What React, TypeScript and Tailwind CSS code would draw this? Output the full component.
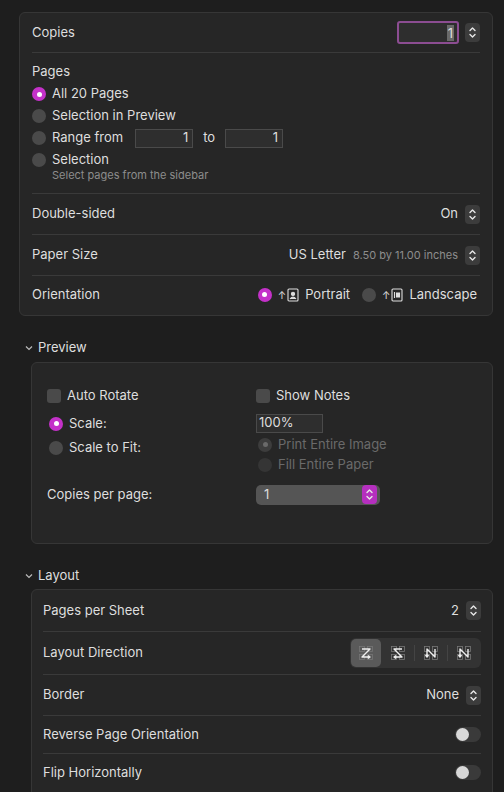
import React from 'react'

const font = { fontFamily: 'Inter, "Liberation Sans", sans-serif' }

function Stepper({ accent = false }: { accent?: boolean }) {
  return (
    <span className={`flex h-[19px] w-[15px] flex-col items-center justify-center rounded-[4px] ${accent ? 'bg-[#b52fbf]' : 'bg-[#3c3c3c]'}`}>
      <svg width="9" height="13" viewBox="0 0 9 13" fill="none" stroke="#e8e8e8" strokeWidth="1.4" strokeLinecap="round" strokeLinejoin="round">
        <path d="M2 4.5 L4.5 2 L7 4.5" />
        <path d="M2 8.5 L4.5 11 L7 8.5" />
      </svg>
    </span>
  )
}

function Radio({ on = false, dim = false }: { on?: boolean; dim?: boolean }) {
  if (on)
    return (
      <span className={`flex h-[14px] w-[14px] items-center justify-center rounded-full ${dim ? 'bg-[#3d3d3d]' : 'bg-[#c431c9]'}`}>
        <span className={`h-[5px] w-[5px] rounded-full ${dim ? 'bg-[#6a6a6a]' : 'bg-white'}`} />
      </span>
    )
  return <span className={`h-[14px] w-[14px] rounded-full ${dim ? 'bg-[#353535]' : 'bg-[#4a4a4a]'}`} />
}

function Check() {
  return <span className="h-[14px] w-[14px] rounded-[3px] bg-[#4a4a4a]" />
}

function Toggle() {
  return (
    <span className="flex h-[15px] w-[26px] items-center rounded-full bg-[#3a3a3a] px-[1px]">
      <span className="h-[13px] w-[13px] rounded-full bg-[#d8d8d8]" />
    </span>
  )
}

function Field({ w, children }: { w: string; children: React.ReactNode }) {
  return <span className={`flex h-[19px] ${w} items-center justify-end border border-[#4a4a4a] bg-[#2e2e2e] px-[4px] text-[13px]`}>{children}</span>
}

function Divider() {
  return <div className="h-px bg-[#3a3a3a]" />
}

function Chevron() {
  return (
    <svg width="8" height="6" viewBox="0 0 8 6" fill="none" stroke="#bbb" strokeWidth="1.2">
      <path d="M1 1.5 L4 4.5 L7 1.5" />
    </svg>
  )
}

function DirIcon({ d }: { d: string }) {
  return (
    <svg width="16" height="16" viewBox="0 0 16 16" fill="none">
      <rect x="1.5" y="1.5" width="5" height="5" stroke="#777" strokeWidth="0.8" />
      <rect x="9.5" y="1.5" width="5" height="5" stroke="#777" strokeWidth="0.8" />
      <rect x="1.5" y="9.5" width="5" height="5" stroke="#777" strokeWidth="0.8" />
      <rect x="9.5" y="9.5" width="5" height="5" stroke="#777" strokeWidth="0.8" />
      <path d={d} stroke="#eee" strokeWidth="1.4" strokeLinejoin="round" />
    </svg>
  )
}

function PageIcon({ land = false }: { land?: boolean }) {
  return (
    <span className="flex items-center gap-[1px]">
      <span className="text-[10px] leading-none">↑</span>
      <svg width="12" height="14" viewBox="0 0 12 14" fill="none" stroke="#ddd" strokeWidth="1.1">
        <rect x="1" y="1" width="10" height="12" rx="1" />
        {land ? <path d="M3.5 4v6M5.5 5h3v4h-3z" fill="#ddd" /> : <path d="M3 11q3-4 6 0M6 7.5a1.6 1.6 0 1 0 0-3.2 1.6 1.6 0 0 0 0 3.2z" fill="#ddd" />}
      </svg>
    </span>
  )
}

export default function App() {
  return (
    <div className="h-[792px] w-[504px] overflow-hidden bg-[#1e1e1e] pt-[12px] text-[13px] text-[#dedede]" style={font}>
      <div className="ml-[19px] mr-[11px] rounded-[6px] border border-[#363636] bg-[#262626] px-[12px] pb-[2px]">
        <div className="flex h-[39px] items-center justify-between">
          <span>Copies</span>
          <span className="flex items-center gap-[6px]">
            <span className="flex h-[23px] w-[62px] items-center justify-end rounded-[3px] border-[2px] border-[#8c4d92] bg-[#2e2e2e] pr-[3px]">
              <span className="bg-[#6a6a6a] px-[1px] leading-[16px]">1</span>
            </span>
            <Stepper />
          </span>
        </div>
        <Divider />
        <div className="pb-[10px] pt-[9px]">
          <div className="mb-[6px] leading-[18px]">Pages</div>
          <div className="flex flex-col gap-[6px]">
            <label className="flex h-[16px] items-center gap-[6px]"><Radio on />All 20 Pages</label>
            <label className="flex h-[16px] items-center gap-[6px]"><Radio />Selection in Preview</label>
            <label className="flex h-[16px] items-center gap-[6px]">
              <Radio />Range from
              <span className="ml-[6px]"><Field w="w-[58px]">1</Field></span>
              <span className="mx-[4px]">to</span>
              <Field w="w-[58px]">1</Field>
            </label>
            <div>
              <label className="flex h-[16px] items-center gap-[6px]"><Radio />Selection</label>
              <div className="ml-[20px] text-[11px] leading-[15px] text-[#8d8d8d]">Select pages from the sidebar</div>
            </div>
          </div>
        </div>
        <Divider />
        <div className="flex h-[40px] items-center justify-between">
          <span>Double-sided</span>
          <span className="flex items-center gap-[7px]">On<Stepper /></span>
        </div>
        <Divider />
        <div className="flex h-[40px] items-center justify-between">
          <span>Paper Size</span>
          <span className="flex items-center gap-[7px]">US Letter<span className="text-[11px] text-[#8d8d8d]">8.50 by 11.00 inches</span><Stepper /></span>
        </div>
        <Divider />
        <div className="flex h-[37px] items-center justify-between">
          <span>Orientation</span>
          <span className="flex items-center gap-[6px] pr-[3px]">
            <Radio on /><PageIcon /><span className="mr-[6px]">Portrait</span>
            <Radio /><PageIcon land /><span>Landscape</span>
          </span>
        </div>
      </div>

      <div className="ml-[25px] mt-[23px] flex h-[18px] items-center gap-[5px]"><Chevron />Preview</div>
      <div className="ml-[31px] mr-[11px] mt-[5px] h-[182px] rounded-[6px] border border-[#363636] bg-[#262626] px-[15px] pt-[23px]">
        <div className="grid grid-cols-[209px_1fr] gap-y-[8px]">
          <label className="flex items-center gap-[6px]"><Check />Auto Rotate</label>
          <label className="flex items-center gap-[6px]"><Check />Show Notes</label>
          <div className="flex flex-col gap-[8px] pt-[2px]">
            <label className="flex h-[16px] items-center gap-[6px] pl-[2px]"><Radio on />Scale:</label>
            <label className="flex h-[16px] items-center gap-[6px] pl-[2px]"><Radio />Scale to Fit:</label>
          </div>
          <div className="flex flex-col gap-[4px]">
            <span className="flex h-[19px] w-[67px] items-center border border-[#4a4a4a] bg-[#2e2e2e] px-[2px]">100%</span>
            <label className="flex h-[16px] items-center gap-[6px] pl-[2px] text-[#6a6a6a]"><Radio on dim />Print Entire Image</label>
            <label className="flex h-[16px] items-center gap-[6px] pl-[2px] text-[#6a6a6a]"><Radio dim />Fill Entire Paper</label>
          </div>
          <div className="flex items-center pt-[4px]">Copies per page:</div>
          <div className="pt-[4px]">
            <span className="flex h-[20px] w-[124px] items-center justify-between rounded-[5px] bg-[#555] pl-[8px] pr-[3px]">1<Stepper accent /></span>
          </div>
        </div>
      </div>

      <div className="ml-[25px] mt-[23px] flex h-[18px] items-center gap-[5px]"><Chevron />Layout</div>
      <div className="ml-[31px] mr-[11px] mt-[4px] h-[220px] rounded-[6px] border border-[#363636] bg-[#262626] px-[11px]">
        <div className="flex h-[41px] items-center justify-between">
          <span>Pages per Sheet</span>
          <span className="flex items-center gap-[7px]">2<Stepper /></span>
        </div>
        <Divider />
        <div className="flex h-[42px] items-center justify-between">
          <span>Layout Direction</span>
          <span className="flex h-[30px] items-center rounded-[6px] bg-[#333] p-[1px]">
            <span className="flex h-[28px] w-[30px] items-center justify-center rounded-[5px] bg-[#5a5a5a]"><DirIcon d="M4 4h8L4 12h8M10 10.5l2 1.5-2 1.5" /></span>
            <span className="flex w-[33px] justify-center"><DirIcon d="M12 4H4l8 8H4M6 10.5l-2 1.5 2 1.5" /></span>
            <span className="h-[16px] w-px bg-[#444]" />
            <span className="flex w-[32px] justify-center"><DirIcon d="M12 4v8L4 4v8M2.5 10l1.5 2 1.5-2" /></span>
            <span className="h-[16px] w-px bg-[#444]" />
            <span className="flex w-[32px] justify-center"><DirIcon d="M4 12V4l8 8V4M2.5 10l1.5 2 1.5-2" /></span>
          </span>
        </div>
        <Divider />
        <div className="flex h-[40px] items-center justify-between">
          <span>Border</span>
          <span className="flex items-center gap-[7px]">None<Stepper /></span>
        </div>
        <Divider />
        <div className="flex h-[37px] items-center justify-between">
          <span>Reverse Page Orientation</span>
          <Toggle />
        </div>
        <Divider />
        <div className="flex h-[37px] items-center justify-between">
          <span>Flip Horizontally</span>
          <Toggle />
        </div>
      </div>
    </div>
  )
}
